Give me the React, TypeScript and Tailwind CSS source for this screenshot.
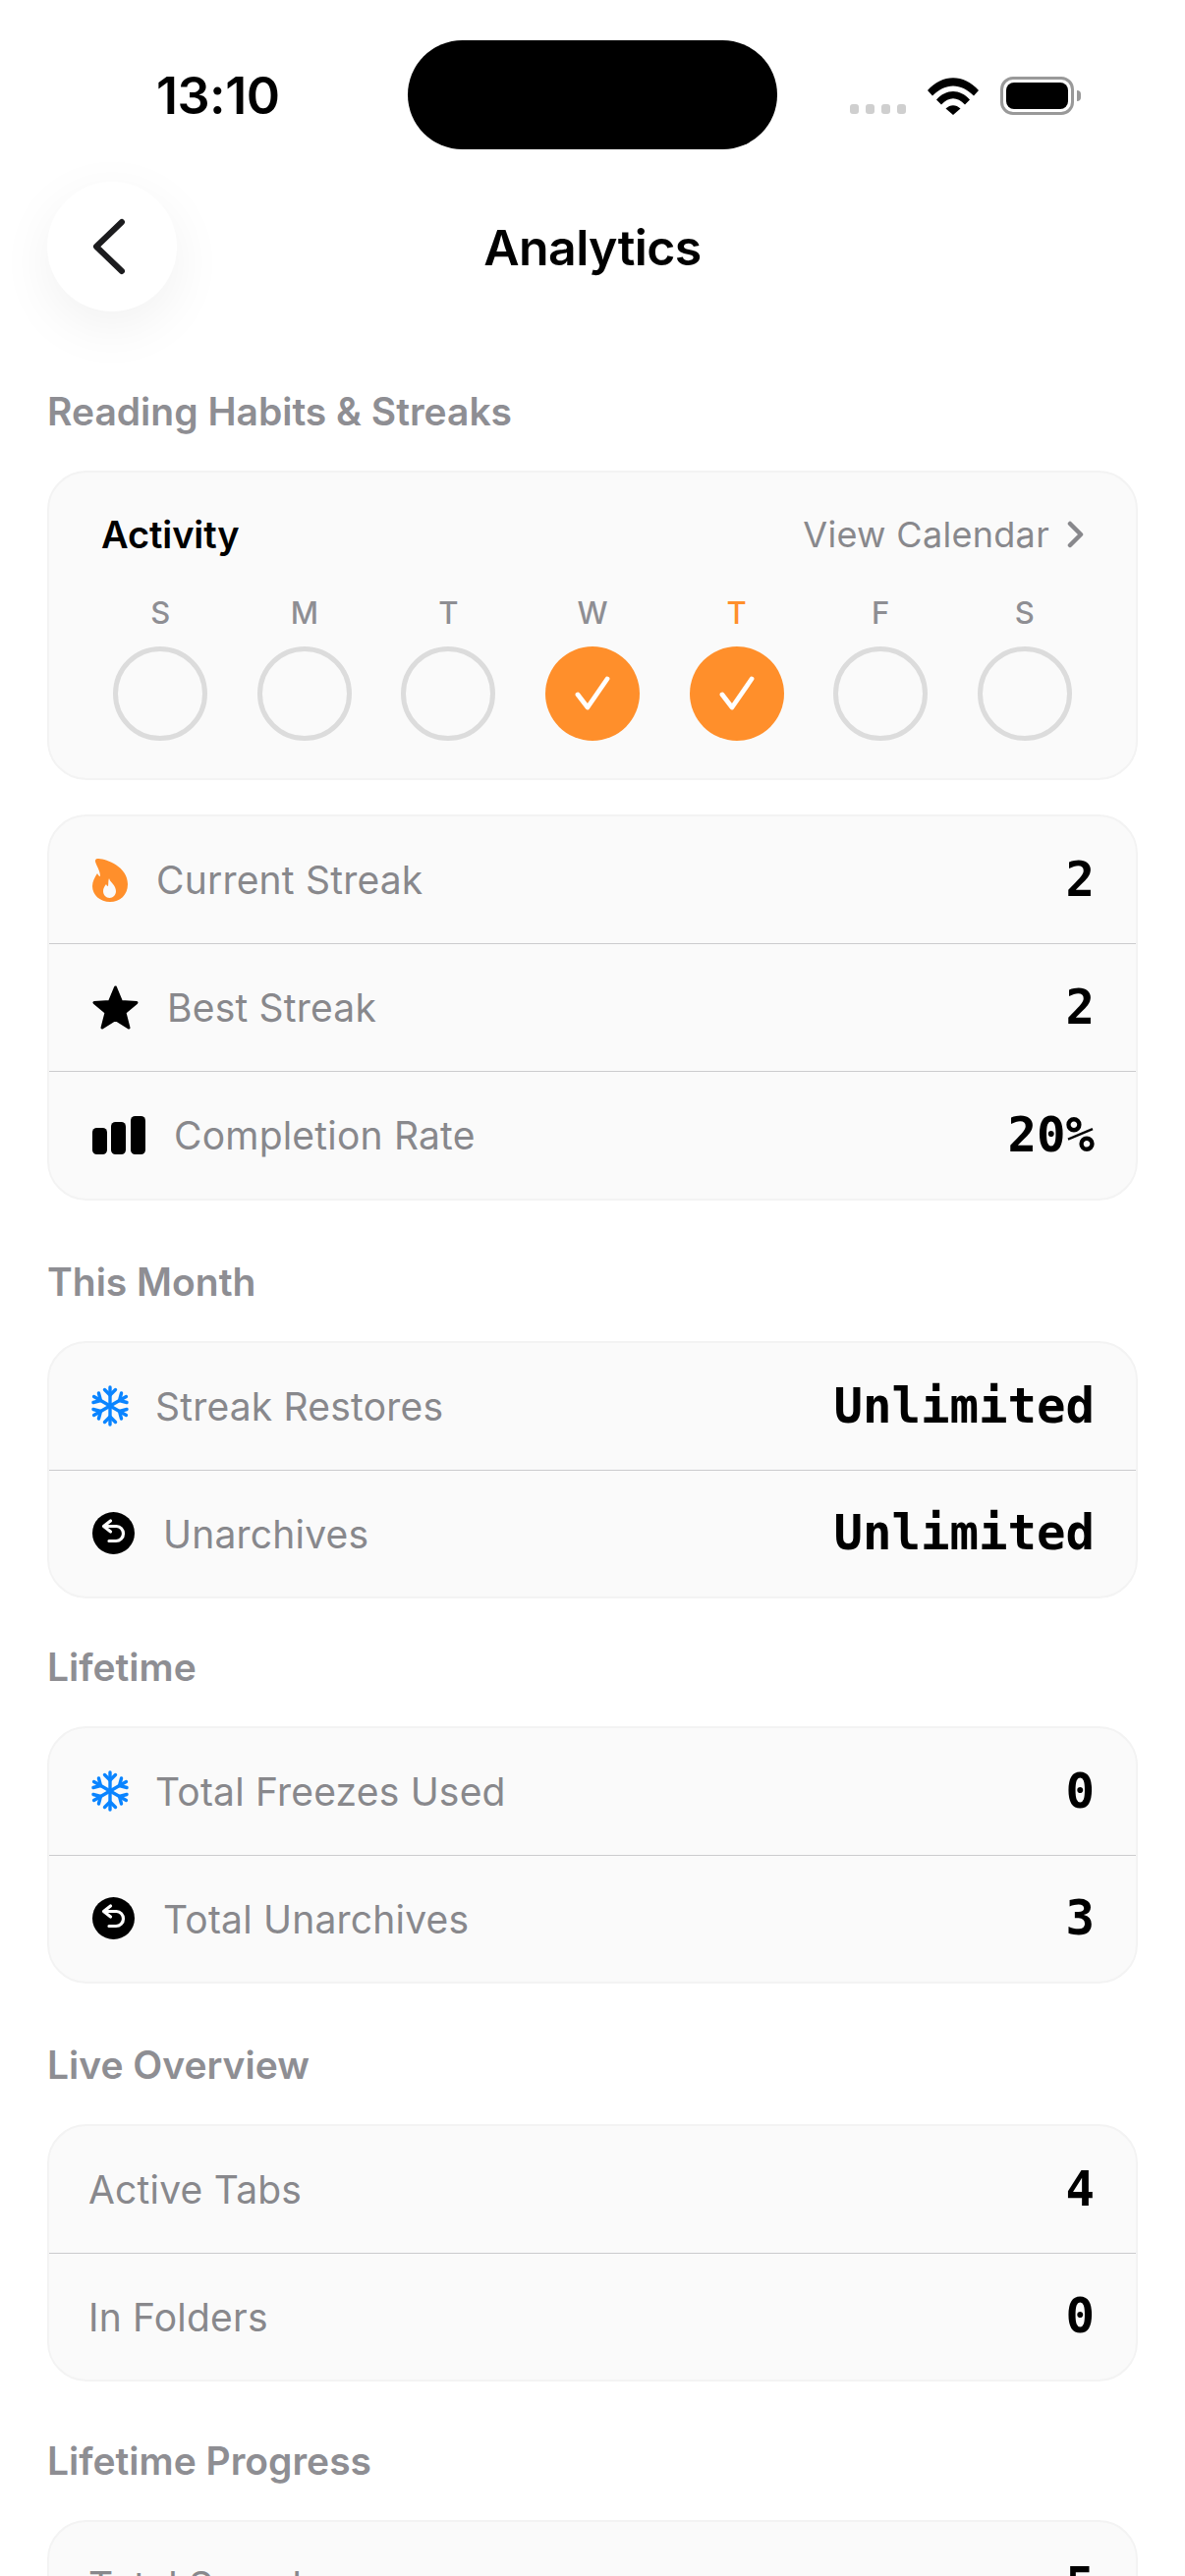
const days = [
  { letter: "S" },
  { letter: "M" },
  { letter: "T" },
  { letter: "W", done: true },
  { letter: "T", done: true, today: true },
  { letter: "F" },
  { letter: "S" },
];

const FlameIcon = () => (
  <svg width="36" height="44" viewBox="0 0 36 44" className="shrink-0">
    <path
      fill="#FF8F2B"
      d="M5 0C12-.5 36 7 36 26C36 37 28 44 18 44C8 44 0 37 0 28C0 23 2.500 19 5 15C6 17 7 18 8 18C8 12 4 7 3 3C2.700 1.500 3.500 0 5 0Z"
    />
    <path
      fill="#FAFAFA"
      d="M17 20C18 24 24 27 24 33C24 37 21 40 17.500 40C14 40 11 37 11 33C11 30 12.500 28 14 26C14.500 27 15 28 16 28C16.500 25 16 22 17 20Z"
    />
  </svg>
);

const StarIcon = () => (
  <svg width="47" height="45" viewBox="0 0 47 45" className="shrink-0">
    <path
      fill="#000"
      stroke="#000"
      strokeWidth="3"
      strokeLinejoin="round"
      d="M23.500 2L29.500 16.500L45 17.500L33 27.500L37 43L23.500 34.500L10 43L14 27.500L2 17.500L17.500 16.500Z"
    />
  </svg>
);

const BarsIcon = () => (
  <svg width="54" height="39" viewBox="0 0 54 39" className="shrink-0">
    <rect x="0" y="12" width="15" height="27" rx="4.500" fill="#000" />
    <rect x="19" y="6" width="15" height="33" rx="4.500" fill="#000" />
    <rect x="39" y="0" width="15" height="39" rx="4.500" fill="#000" />
  </svg>
);

const SnowflakeIcon = () => (
  <svg
    width="40"
    height="42"
    viewBox="0 0 40 42"
    fill="none"
    stroke="#0A84FF"
    strokeWidth="3.400"
    strokeLinecap="round"
    strokeLinejoin="round"
    className="shrink-0 -ml-[2px] -mr-[3px]"
  >
    {[0, 60, 120, 180, 240, 300].map((deg) => (
      <g key={deg} transform={`rotate(${deg} 20 21)`}>
        <path d="M20 21V2" />
        <path d="M14.500 4.500L20 10L25.500 4.500" />
      </g>
    ))}
  </svg>
);

const UndoIcon = () => (
  <svg width="43" height="43" viewBox="0 0 43 43" fill="none" className="shrink-0">
    <circle cx="21.500" cy="21.500" r="21.500" fill="#000" />
    <path
      stroke="#fff"
      strokeWidth="3.200"
      strokeLinecap="round"
      strokeLinejoin="round"
      d="M18.500 9L11.500 14.500L18.500 20M11.500 14.500H24.500C28.500 14.500 31.500 18 31.500 22C31.500 26.500 28 29.500 24 29.500H17"
    />
  </svg>
);

const Check = () => (
  <svg width="36" height="36" viewBox="0 0 36 36" fill="none">
    <path
      d="M3 19L13 32L33 3"
      stroke="#fff"
      strokeWidth="4.800"
      strokeLinecap="round"
      strokeLinejoin="round"
    />
  </svg>
);

const SectionLabel = ({ title, className }: { title: string; className: string }) => (
  <div className={`h-[50px] leading-[50px] text-[39px] font-semibold text-[#8E8E93] mb-[35px] ${className}`}>
    {title}
  </div>
);

const Row = ({
  icon,
  label,
  value,
}: {
  icon?: React.ReactNode;
  label: string;
  value: string;
}) => (
  <div className={`flex-1 flex items-center justify-between pr-[42px] border-b border-[#CBCBCD] last:border-b-0 ${icon ? "pl-[44px]" : "pl-[40px]"}`}>
    <div className="flex items-center gap-[29px]">
      {icon}
      <span className="text-[39px] text-[#88888C] tracking-[0.2px] pt-[2px]">{label}</span>
    </div>
    <span className="text-[49px] font-bold text-black font-['DejaVu_Sans_Mono',monospace]">
      {value}
    </span>
  </div>
);

const App = () => {
  return (
    <div className="w-[1206px] h-[2622px] overflow-hidden bg-white font-['Inter','Liberation_Sans',sans-serif]">
      <div className="flex items-center h-[111px] mt-[41px]">
        <div className="w-[415px] pl-[159px] pt-[2px] text-[52px] font-semibold text-black leading-none tracking-[-0.5px]">13:10</div>
        <div className="w-[376px] h-[111px] rounded-[56px] bg-black" />
        <div className="flex items-end ml-[74px] h-[40px]">
          <div className="flex gap-[7px] mb-[1px]">
            <div className="w-[9px] h-[10px] rounded-[3px] bg-[#CFCFCF]" />
            <div className="w-[9px] h-[10px] rounded-[3px] bg-[#CFCFCF]" />
            <div className="w-[9px] h-[10px] rounded-[3px] bg-[#CFCFCF]" />
            <div className="w-[9px] h-[10px] rounded-[3px] bg-[#CFCFCF]" />
          </div>
          <svg width="52" height="38" viewBox="0 0 52 38" className="ml-[22px]">
            <path d="M0 13C15-4 37-4 52 13L47 18.500C34 5 18 5 5 18.500Z" fill="#000" />
            <path d="M9 22.500C19 11 33 11 43 22.500L38 27.500C30 19 22 19 14 27.500Z" fill="#000" />
            <path d="M18.500 31.500C23 27 29 27 33.500 31.500L26 38Z" fill="#000" />
          </svg>
          <div className="ml-[22px] w-[75px] h-[39px] rounded-[13px] border-[3px] border-[#999] p-[3px]">
            <div className="w-full h-full rounded-[8px] bg-black" />
          </div>
          <div className="w-[4px] h-[11px] mb-[14px] ml-[3px] rounded-r-full bg-[#999]" />
        </div>
      </div>

      <div className="relative flex items-center justify-center h-[132px] mt-[33px]">
        <div className="absolute left-[48px] top-0 w-[132px] h-[132px] rounded-full bg-white shadow-[0_16px_56px_rgba(0,0,0,0.06)] flex items-center justify-center">
          <svg width="40" height="58" viewBox="0 0 40 58" fill="none" className="mr-[6px]">
            <path d="M33 4L7 29L33 54" stroke="#1C1C1E" strokeWidth="6" strokeLinecap="round" strokeLinejoin="round" />
          </svg>
        </div>
        <span className="text-[50px] font-semibold text-black tracking-[-0.6px] pt-[2px]">Analytics</span>
      </div>

      <div className="px-[48px]">
        <SectionLabel title="Reading Habits & Streaks" className="mt-[77px]" />

        <div className="h-[315px] rounded-[40px] border-2 border-[#F3F3F3] bg-[#FAFAFA] pt-[35px]">
          <div className="flex items-center justify-between pl-[53px] pr-[52px] h-[56px]">
            <span className="text-[38px] font-semibold text-black tracking-[-0.1px]">Activity</span>
            <div className="flex items-center gap-[18px]">
              <span className="text-[36px] text-[#88888C] tracking-[0.3px]">View Calendar</span>
              <svg width="18" height="28" viewBox="0 0 18 28" fill="none">
                <path d="M3 3L14 14L3 25" stroke="#88888C" strokeWidth="4.500" strokeLinecap="round" strokeLinejoin="round" />
              </svg>
            </div>
          </div>
          <div className="grid grid-cols-7 px-[40px] mt-[30px]">
            {days.map((d, i) => (
              <div key={i} className="flex flex-col items-center">
                <span className={`h-[44px] leading-[44px] text-[31px] font-medium ${d.today ? "text-[#FF8F2B]" : "text-[#8E8E93]"}`}>
                  {d.letter}
                </span>
                {d.done ? (
                  <div className="w-[96px] h-[96px] mt-[12px] rounded-full bg-[#FF8F2B] flex items-center justify-center">
                    <Check />
                  </div>
                ) : (
                  <div className="w-[96px] h-[96px] mt-[12px] rounded-full border-[5px] border-[#DCDCDC]" />
                )}
              </div>
            ))}
          </div>
        </div>

        <div className="h-[393px] mt-[35px] flex flex-col rounded-[40px] border-2 border-[#F3F3F3] bg-[#FAFAFA]">
          <Row icon={<FlameIcon />} label="Current Streak" value="2" />
          <Row icon={<StarIcon />} label="Best Streak" value="2" />
          <Row icon={<BarsIcon />} label="Completion Rate" value="20%" />
        </div>

        <SectionLabel title="This Month" className="mt-[58px]" />
        <div className="h-[262px] flex flex-col rounded-[40px] border-2 border-[#F3F3F3] bg-[#FAFAFA]">
          <Row icon={<SnowflakeIcon />} label="Streak Restores" value="Unlimited" />
          <Row icon={<UndoIcon />} label="Unarchives" value="Unlimited" />
        </div>

        <SectionLabel title="Lifetime" className="mt-[45px]" />
        <div className="h-[262px] flex flex-col rounded-[40px] border-2 border-[#F3F3F3] bg-[#FAFAFA]">
          <Row icon={<SnowflakeIcon />} label="Total Freezes Used" value="0" />
          <Row icon={<UndoIcon />} label="Total Unarchives" value="3" />
        </div>

        <SectionLabel title="Live Overview" className="mt-[58px]" />
        <div className="h-[262px] flex flex-col rounded-[40px] border-2 border-[#F3F3F3] bg-[#FAFAFA]">
          <Row label="Active Tabs" value="4" />
          <Row label="In Folders" value="0" />
        </div>

        <SectionLabel title="Lifetime Progress" className="mt-[56px]" />
        <div className="h-[262px] flex flex-col rounded-[40px] border-2 border-[#F3F3F3] bg-[#FAFAFA]">
          <Row label="Total Saved" value="5" />
          <Row label="Total Read" value="1" />
        </div>
      </div>
    </div>
  );
};

export default App;
